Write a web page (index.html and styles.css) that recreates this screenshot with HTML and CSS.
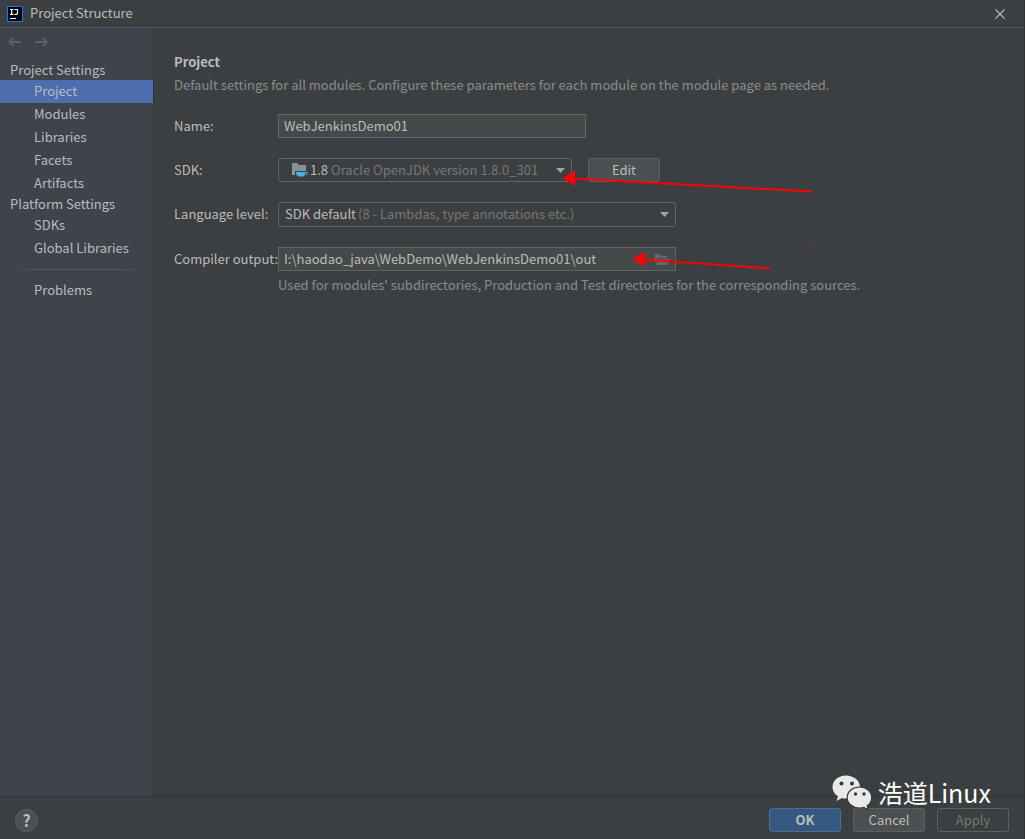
FILE: index.html
```html
<!DOCTYPE html>
<html lang="en">
<head>
<meta charset="utf-8">
<title>Project Structure</title>
<link rel="stylesheet" href="styles.css">
</head>
<body>
<div class="window">
  <header class="titlebar">
    <svg class="logo" width="16" height="16" viewBox="0 0 16 16" aria-hidden="true">
      <rect width="16" height="16" fill="#087cfa"/><rect x="1" y="1" width="14" height="14" fill="#000"/>
      <path d="M3 3.500h3.500M4.700 3.500v5M3 8.300h3.500M7.500 3.500h3v3.500q0 1.300-1.300 1.300h-1.500M3 12.500h6" fill="none" stroke="#fff" stroke-width="1.200"/>
    </svg>
    <h1 class="window-title">Project Structure</h1>
    <button class="icon-button close" aria-label="Close">
      <svg width="10" height="10" viewBox="0 0 10 10"><path d="M0.500 0.500l9 9M9.500 0.500l-9 9" stroke="#b4b6b7" stroke-width="1.200"/></svg>
    </button>
  </header>

  <div class="body">
    <aside class="sidebar">
      <div class="history">
        <button class="icon-button" aria-label="Back" disabled>
          <svg width="14" height="10" viewBox="0 0 14 10"><path d="M13 5H1.500M5.500 1L1.500 5l4 4" fill="none" stroke="#5e6060" stroke-width="1.800"/></svg>
        </button>
        <button class="icon-button" aria-label="Forward" disabled>
          <svg width="14" height="10" viewBox="0 0 14 10"><path d="M0 5h12M8 1l4 4-4 4" fill="none" stroke="#5e6060" stroke-width="1.800"/></svg>
        </button>
      </div>
      <nav>
        <h2 class="group">Project Settings</h2>
        <a class="item selected" href="#project" aria-current="page">Project</a>
        <a class="item" href="#modules">Modules</a>
        <a class="item" href="#libraries">Libraries</a>
        <a class="item" href="#facets">Facets</a>
        <a class="item" href="#artifacts">Artifacts</a>
        <h2 class="group">Platform Settings</h2>
        <a class="item" href="#sdks">SDKs</a>
        <a class="item" href="#global">Global Libraries</a>
        <div class="separator"></div>
        <a class="item" href="#problems">Problems</a>
      </nav>
    </aside>

    <main class="content">
      <h2 class="heading">Project</h2>
      <p class="note">Default settings for all modules. Configure these parameters for each module on the module page as needed.</p>
      <form class="form">
        <label for="name">Name:</label>
        <input class="field name-field" id="name" type="text" value="WebJenkinsDemo01">

        <label for="sdk">SDK:</label>
        <div class="sdk-row">
          <div class="combo sdk-combo">
            <select class="select" id="sdk"><option>1.8</option></select>
            <svg class="combo-icon" width="16" height="14" viewBox="0 0 16 14" aria-hidden="true">
              <path d="M0 0h5l2 2h7v10H0z" fill="#87939a"/>
              <path d="M3 8h13v4h-3l-1.500 2H5.500L3 12z" fill="#3c3f41"/>
              <path d="M4 9h11.500v2.500H13l-1 2H6L4 11z" fill="#40b6e0"/><path d="M13 10h1.500v1H13z" fill="#3c3f41"/>
            </svg>
            <span class="hint">Oracle OpenJDK version 1.8.0_301</span>
            <svg class="caret" width="9" height="5" viewBox="0 0 9 5" aria-hidden="true"><path d="M0 0h9L4.500 5z" fill="#a3a5a6"/></svg>
          </div>
          <button class="button" type="button">Edit</button>
        </div>

        <label for="level">Language level:</label>
        <div class="combo level-combo">
          <select class="select" id="level"><option>SDK default</option></select>
          <span class="hint">(8 - Lambdas, type annotations etc.)</span>
          <svg class="caret" width="9" height="5" viewBox="0 0 9 5" aria-hidden="true"><path d="M0 0h9L4.500 5z" fill="#a3a5a6"/></svg>
        </div>

        <label for="output">Compiler output:</label>
        <div class="combo output-box">
          <input class="field" id="output" type="text" value="I:\haodao_java\WebDemo\WebJenkinsDemo01\out">
          <button class="icon-button browse" type="button" aria-label="Browse">
            <svg width="15" height="11" viewBox="0 0 15 11"><path d="M0 0h5l1.500 2H12v2H3L0 9z" fill="#65696b"/><path d="M3.500 5H15l-2.500 6H0.500z" fill="#65696b"/></svg>
          </button>
        </div>
        <p class="note help-text">Used for modules' subdirectories, Production and Test directories for the corresponding sources.</p>
      </form>
      <svg class="arrows" width="260" height="110" viewBox="560 165 260 110" aria-hidden="true">
        <path d="M573 178.500L812 191.500M643 259.500L770 268.500" stroke="#f00" stroke-width="2"/>
        <path d="M562.500 178l12.500-7.500v15.500zM632.500 259l12.500-7.500v15.500z" fill="#f00"/>
        <circle cx="808.500" cy="243.500" r="1" fill="#e01818"/>
      </svg>
    </main>
  </div>

  <footer class="footer">
    <button class="help" aria-label="Help">?</button>
    <div class="actions">
      <button class="button primary">OK</button>
      <button class="button">Cancel</button>
      <button class="button" disabled>Apply</button>
    </div>
    <div class="watermark">
      <svg width="40" height="35" viewBox="0 0 40 35" aria-hidden="true">
        <path d="M14 0.500C6.500 0.500 0.500 5.500 0.500 12c0 4 2 7 5.500 9.300L4.500 26l5.500-3c6 2 18-1 18-11C28 5.500 21.500 0.500 14 0.500z" fill="#e9e9e9"/>
        <path d="M27.500 12C20.500 12 15.200 16.500 15.200 22.500S20.500 33 27.500 33c1.500 0 3-.2 4.200-.6l4.500 2.400-1-4.100c2.800-1.900 4.500-4.800 4.500-8.200C39.700 16.500 34.500 12 27.500 12z" fill="#e9e9e9" stroke="#35383a" stroke-width="1.200"/>
        <g fill="#35383a"><circle cx="9.500" cy="8.500" r="2"/><circle cx="20" cy="8.500" r="2"/><circle cx="23.500" cy="19" r="1.700"/><circle cx="32" cy="19" r="1.700"/></g>
      </svg>
      <span lang="zh">浩道Linux</span>
    </div>
  </footer>
</div>
</body>
</html>
```
FILE: styles.css
```css
* { box-sizing: border-box; }

body {
  margin: 0;
  background: #3c3f41;
  color: #bbbbbb;
  font: 13px/19px "Noto Sans CJK SC", "Noto Sans", sans-serif;
}

h1, h2, p { margin: 0; font-size: inherit; font-weight: 400; }
button, input, select { font: inherit; color: inherit; }
svg { display: block; }

.window {
  display: flex;
  flex-direction: column;
  min-height: 100vh;
  border-right: 1px solid #2f3133;
}

.titlebar {
  display: flex;
  align-items: center;
  height: 28px;
  padding: 0 19px 0 7px;
  border-bottom: 1px solid #515456;
}
.window-title { flex: 1; margin-left: 7px; padding-bottom: 2px; }
.close { padding-bottom: 2px; }

.icon-button {
  display: flex;
  padding: 0;
  border: 0;
  background: none;
}

.body { display: flex; flex: 1; }

.sidebar {
  width: 154px;
  flex: none;
  background: #3f434c;
  border-right: 1px solid #323232;
}
.history { display: flex; gap: 13px; padding: 9px 8px 14px; }
.group { padding: 0 0 2px 10px; line-height: 17px; }
.item {
  display: block;
  padding: 0 0 2px 34px;
  line-height: 21px;
  color: inherit;
  text-decoration: none;
}
.item.selected { background: #4b6eaf; }
.separator {
  height: 1px;
  margin: 9px 6px;
  background: linear-gradient(90deg, transparent, #55565a 20%, #55565a 80%, transparent);
}

.content {
  position: relative;
  flex: 1;
  padding: 24px 20px;
}
.heading { font-weight: 700; }
.note { color: #8a8c8d; }
.heading + .note { margin-top: 4px; }

.form {
  display: grid;
  grid-template-columns: 104px 1fr;
  align-items: center;
  row-gap: 20px;
  margin-top: 20px;
}
.form label { padding-bottom: 2px; white-space: nowrap; }
.field {
  width: 100%;
  height: 24px;
  padding: 0 5px 2px;
  border: 1px solid #646464;
  border-radius: 0;
  background: #45494a;
  outline: 0;
}
.name-field { max-width: 308px; }
.sdk-row { display: flex; gap: 16px; }

.combo { display: grid; align-items: center; width: 100%; max-width: 398px; }
.combo > * { grid-area: 1 / 1; }
.sdk-combo { max-width: 294px; }
.select {
  appearance: none;
  width: 100%;
  height: 24px;
  padding: 0 6px 2px;
  border: 1px solid #646464;
  border-radius: 3px;
  background: #3c3f41;
}
.sdk-combo .select { padding-left: 31px; }
.level-combo .select { height: 25px; }
.combo-icon { margin-left: 14px; }
.hint { padding-bottom: 2px; color: #777777; pointer-events: none; }
.sdk-combo .hint { padding-left: 53px; }
.level-combo .hint { padding-left: 80px; }
.caret { justify-self: end; margin-right: 7px; pointer-events: none; }
.browse { justify-self: end; margin-right: 6px; }
.help-text { grid-column: 2; margin-top: -16px; }

.arrows {
  position: absolute;
  left: 406px;
  top: 137px;
  pointer-events: none;
}

.button {
  width: 72px;
  height: 24px;
  padding: 0 0 1px;
  border: 1px solid #5e6060;
  border-radius: 3px;
  background: #4c5052;
}
.button:disabled { background: none; color: #777777; }
.primary { background: #365880; border-color: #4c708c; font-weight: 700; }

.footer {
  position: relative;
  display: flex;
  align-items: center;
  justify-content: space-between;
  height: 43px;
  padding: 4px 15px 0;
  border-top: 1px solid #323232;
}
.help {
  width: 23px;
  height: 23px;
  padding: 0;
  border: 1px solid #5e6060;
  border-radius: 50%;
  background: #4c5052;
  font-size: 16px;
  font-weight: 700;
  line-height: 20px;
}
.actions { display: flex; gap: 12px; }
.watermark {
  position: absolute;
  right: 33px;
  bottom: 29px;
  display: flex;
  align-items: center;
  gap: 6px;
  color: #ffffff;
  font: 25px/36px "Noto Sans CJK SC", sans-serif;
  pointer-events: none;
}
```
